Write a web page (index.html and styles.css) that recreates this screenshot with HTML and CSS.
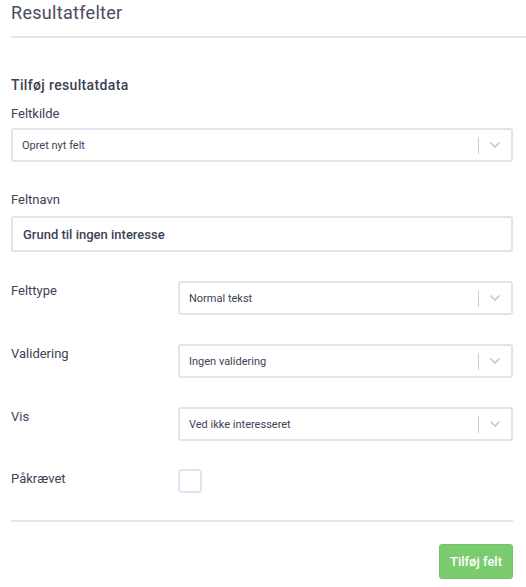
FILE: index.html
```html
<!DOCTYPE html>
<html lang="da">
<head>
    <meta charset="UTF-8">
    <meta name="viewport" content="width=device-width, initial-scale=1.0">
    <title>Resultatfelter</title>
    <link rel="stylesheet" href="styles.css">
</head>
<body>
    <div class="header">
        <h1>Resultatfelter</h1>
    </div>

    <div class="content">
        <h2>Tilføj resultatdata</h2>

        <label class="block-label">Feltkilde</label>
        <div class="select">
            <span class="select-value">Opret nyt felt</span>
            <span class="select-sep"></span>
            <svg class="select-arrow" width="12" height="8" viewBox="0 0 12 8"><path d="M1.5 1.5 L6 6 L10.5 1.5" fill="none" stroke="#c8c8cc" stroke-width="1.6"/></svg>
        </div>

        <label class="block-label name-label">Feltnavn</label>
        <input type="text" class="text-input" value="Grund til ingen interesse">

        <div class="form-row">
            <label>Felttype</label>
            <div class="select">
                <span class="select-value">Normal tekst</span>
                <span class="select-sep"></span>
                <svg class="select-arrow" width="12" height="8" viewBox="0 0 12 8"><path d="M1.5 1.5 L6 6 L10.5 1.5" fill="none" stroke="#c8c8cc" stroke-width="1.6"/></svg>
            </div>
        </div>

        <div class="form-row">
            <label>Validering</label>
            <div class="select">
                <span class="select-value">Ingen validering</span>
                <span class="select-sep"></span>
                <svg class="select-arrow" width="12" height="8" viewBox="0 0 12 8"><path d="M1.5 1.5 L6 6 L10.5 1.5" fill="none" stroke="#c8c8cc" stroke-width="1.6"/></svg>
            </div>
        </div>

        <div class="form-row">
            <label>Vis</label>
            <div class="select">
                <span class="select-value">Ved ikke interesseret</span>
                <span class="select-sep"></span>
                <svg class="select-arrow" width="12" height="8" viewBox="0 0 12 8"><path d="M1.5 1.5 L6 6 L10.5 1.5" fill="none" stroke="#c8c8cc" stroke-width="1.6"/></svg>
            </div>
        </div>

        <div class="form-row check-row">
            <label>Påkrævet</label>
            <span class="checkbox"></span>
        </div>

        <div class="footer">
            <button class="add-button">Tilføj felt</button>
        </div>
    </div>
</body>
</html>
```

FILE: styles.css
```css
body {
    font-family: Roboto, Arial, sans-serif;
    color: #3d4254;
    margin: 0;
    padding: 0;
    background: #fff;
}

.header {
    margin-left: 11px;
    border-bottom: 2px solid #e1e4ef;
    height: 36px;
}

h1 {
    margin: 0;
    font-size: 18px;
    font-weight: 400;
    line-height: 26px;
    letter-spacing: 0.3px;
    color: #474c5e;
}

.content {
    padding: 0 13px 0 11px;
}

h2 {
    margin: 37px 0 0;
    font-size: 14px;
    font-weight: 500;
    line-height: 20px;
    letter-spacing: 0.35px;
    color: #3d4254;
}

.block-label {
    display: block;
    font-size: 13px;
    line-height: 20px;
    margin-top: 9px;
    margin-bottom: 4px;
}

.name-label {
    margin-top: 28px;
    margin-bottom: 6px;
}

.select {
    display: flex;
    align-items: center;
    height: 34px;
    box-sizing: border-box;
    border: 2px solid #e1e4ef;
    border-radius: 3px;
    background: #fff;
    flex: 1;
}

.select-value {
    flex: 1;
    font-size: 11px;
    padding-left: 9px;
    color: #3d4254;
}

.select-sep {
    width: 1px;
    height: 17px;
    background: #cfcfd4;
}

.select-arrow {
    margin: 0 10px;
}

.text-input {
    display: block;
    width: 100%;
    height: 36px;
    box-sizing: border-box;
    border: 2px solid #e1e4ef;
    border-radius: 3px;
    padding: 0 10px;
    font-family: inherit;
    font-size: 13px;
    font-weight: 500;
    color: #3d4254;
}

.form-row {
    display: flex;
    align-items: flex-start;
    margin-top: 29px;
}

.check-row {
    margin-top: 28px;
}

.form-row label {
    width: 167px;
    font-size: 13px;
    line-height: 20px;
}

.checkbox {
    display: block;
    width: 24px;
    height: 24px;
    box-sizing: border-box;
    border: 2px solid #e1e4ef;
    border-radius: 4px;
}

.footer {
    margin-top: 27px;
    border-top: 2px solid #e1e4ef;
    padding-top: 22px;
    display: flex;
    justify-content: flex-end;
}

.add-button {
    height: 35px;
    padding: 0 10px;
    background: #7acc6e;
    color: #fff;
    border: 1px solid #72c668;
    border-radius: 3px;
    font-family: inherit;
    font-size: 13px;
    font-weight: 500;
    cursor: pointer;
}
```
